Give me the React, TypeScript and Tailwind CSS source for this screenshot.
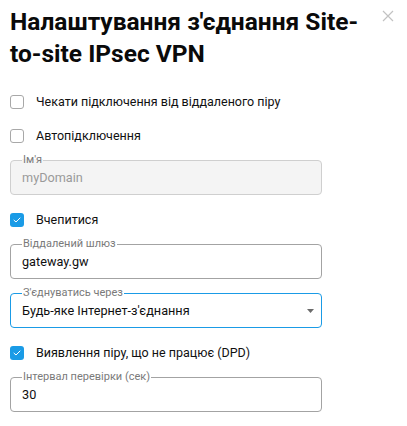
import React from "react";

function CheckRow({ label, checked, className = "" }: { label: string; checked?: boolean; className?: string }) {
  return (
    <label className={`flex items-center h-5 gap-[12px] ${className}`}>
      {checked ? (
        <span className="w-[14px] h-[14px] rounded-[3px] bg-[#1a9be6] flex items-center justify-center">
          <svg width="8" height="6" viewBox="0 0 8 6" fill="none">
            <path d="M1 3.2 L3 5 L7 1" stroke="white" strokeWidth="1" strokeLinecap="round" strokeLinejoin="round" />
          </svg>
        </span>
      ) : (
        <span className="w-[14px] h-[14px] rounded-[3px] border border-[#a8a8a8] bg-white" />
      )}
      <span className="text-[12.5px] text-[#111]">{label}</span>
    </label>
  );
}

function Field({
  label,
  value,
  disabled,
  focused,
  select,
  className = "",
}: {
  label: string;
  value: string;
  disabled?: boolean;
  focused?: boolean;
  select?: boolean;
  className?: string;
}) {
  const border = focused ? "border-[#1a9be6]" : disabled ? "border-[#cfcfcf]" : "border-[#a3a3a3]";
  return (
    <div
      className={`relative w-[312px] h-[35px] rounded-[4px] border ${border} ${
        disabled ? "bg-[#f4f4f4]" : "bg-white"
      } flex items-center pl-[11px] pr-[7px] ${className}`}
    >
      <span
        className={`absolute left-[11px] top-[-8px] px-[1px] text-[11px] leading-[13px] text-[#7a7a7a] ${
          disabled ? "bg-[linear-gradient(to_bottom,white_50%,#f4f4f4_50%)]" : "bg-white"
        }`}
      >
        {label}
      </span>
      <span className={`flex-1 text-[12.7px] ${disabled ? "text-[#9a9a9a]" : "text-[#0f0f0f]"}`}>{value}</span>
      {select && (
        <svg width="7" height="4" viewBox="0 0 7 4">
          <path d="M0 0 H7 L3.5 4 Z" fill="#6b6b6b" />
        </svg>
      )}
    </div>
  );
}

export default function App() {
  return (
    <div className="relative w-[407px] h-[426px] bg-white font-['Roboto',sans-serif] overflow-hidden">
      <button className="absolute left-[382px] top-[10px] w-[12px] h-[12px]" aria-label="close">
        <svg width="12" height="12" viewBox="0 0 12 12">
          <path d="M1 1 L11 11 M11 1 L1 11" stroke="#c2c2c2" strokeWidth="1.2" />
        </svg>
      </button>
      <div className="flex flex-col pl-[10px] pt-[6px]">
        <h1 className="w-[365px] text-[24.5px] leading-[32px] font-bold text-[#0a0a0a]">
          Налаштування з'єднання Site-to-site IPsec VPN
        </h1>
        <CheckRow className="mt-[22px]" label="Чекати підключення від віддаленого піру" />
        <CheckRow className="mt-[14px]" label="Автопідключення" />
        <Field className="mt-[14px]" label="Ім'я" value="myDomain" disabled />
        <CheckRow className="mt-[15px]" label="Вчепитися" checked />
        <Field className="mt-[14px]" label="Віддалений шлюз" value="gateway.gw" />
        <Field className="mt-[14px]" label="З'єднуватись через" value="Будь-яке Інтернет-з'єднання" focused select />
        <CheckRow className="mt-[15px]" label="Виявлення піру, що не працює (DPD)" checked />
        <Field className="mt-[14px]" label="Інтервал перевірки (сек)" value="30" />
      </div>
    </div>
  );
}
